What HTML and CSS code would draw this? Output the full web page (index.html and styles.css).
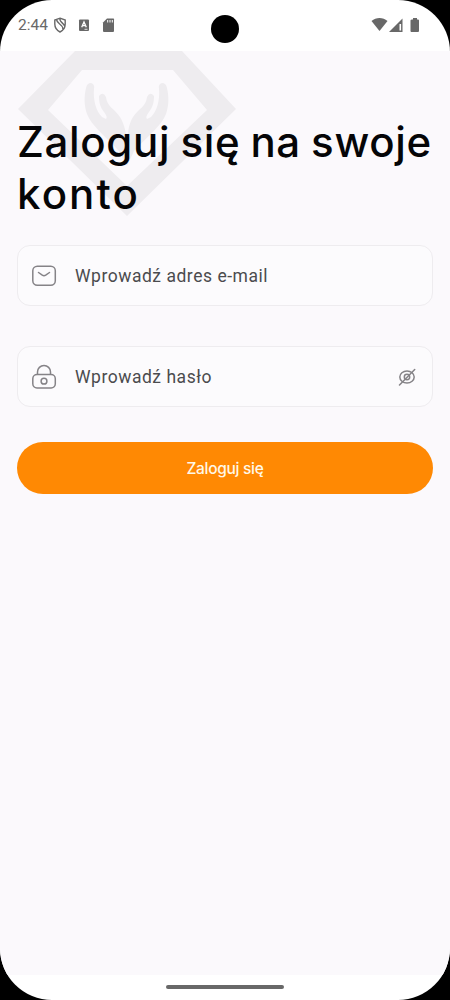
FILE: index.html
```html
<!DOCTYPE html>
<html lang="pl">
<head>
<meta charset="utf-8">
<title>Zaloguj się</title>
<link rel="stylesheet" href="styles.css">
</head>
<body>
<div class="screen">
  <header class="status">
    <span class="clock">2:44</span>
    <svg class="status-left" width="64" height="18" viewBox="0 0 64 18">
      <path d="M7 2.200 12.200 4V8C12.200 12 10 14.500 7 16C4 14.500 1.800 12 1.800 8V4ZM3.500 3.500C4.500 9 9 7 10 13M7 2.500C6 6 11 7 11.500 10" fill="none" stroke="#686868" stroke-width="1.400"/>
      <rect x="26" y="3.500" width="10" height="11.500" rx="1" fill="#686868"/>
      <path d="M28.700 11.300 31 6 33.300 11.300M29.700 9.700H32.300" fill="none" stroke="#fff" stroke-width="1.300"/>
      <path d="M31.500 13.300H34.500" stroke="#fff" stroke-width=".8"/>
      <path d="M54 2.500H60.500Q61 2.500 61 3.200V15Q61 16 60 16H51Q50 16 50 15V6.500Z" fill="#686868"/>
      <path d="M54.700 4V6.500M57 4V6.500M59.300 4V6.500" stroke="#fff" stroke-width="1"/>
    </svg>
    <svg class="status-right" width="50" height="18" viewBox="0 0 50 18">
      <path d="M.5 5C5 1 12 1 16.500 5L8.500 15Z" fill="#686868"/>
      <path d="M31.500 2.500V16H18Z" fill="#686868"/>
      <path d="M29.300 8V14.500" stroke="#fff" stroke-width="1.600"/>
      <path d="M41 3.500H42V2H46V3.500H47Q48 3.500 48 4.500V15Q48 16 47 16H40.500Q39.500 16 39.500 15V4.500Q39.500 3.500 41 3.500Z" fill="#686868"/>
    </svg>
    <span class="camera"></span>
  </header>
  <main class="content">
    <svg class="emblem" width="220" height="166" viewBox="18 51 220 166">
      <path fill="#eeecef" fill-rule="evenodd" d="M75 51H182L236 109 127 216 18 109ZM82 70 48 110 127 186 207 110 173 70Z"/>
      <g fill="#eeecef">
        <path d="M86 88Q87 83 91 83Q95 84 94 89C93 100 96 111 102 117L106 119Q108 117 104 112C100 107 99 102 99 96Q103 91 106 97C107 107 114 108 120 117C125 125 126 134 127 142L127 166L119 151C104 135 91 125 87 114C84 105 84 97 86 88Z"/>
        <path d="M167 88Q166 83 162 83Q158 84 159 89C160 100 157 111 151 117L147 119Q145 117 149 112C153 107 154 102 154 96Q150 91 147 97C146 107 139 108 133 117C128 125 128 134 127 142L127 166L134 151C149 135 162 125 166 114C169 105 169 97 167 88Z"/>
      </g>
    </svg>
    <h1 class="title">Zaloguj się na swoje <span class="wide">konto</span></h1>
    <form class="form">
      <label class="field">
        <svg width="26" height="26" viewBox="0 0 26 26" fill="none" stroke="#858387" stroke-width="1.500" stroke-linecap="round" stroke-linejoin="round"><rect x="1.800" y="3.300" width="22.500" height="19" rx="4.500"/><path d="m7.500 9.500 3.800 2.700q1.700 1.100 3.400 0l3.800-2.700"/></svg>
        <span class="hint">Wprowadź adres e-mail</span>
      </label>
      <label class="field">
        <svg width="26" height="26" viewBox="0 0 26 26" fill="none" stroke="#858387" stroke-width="1.500" stroke-linecap="round"><rect x="1.800" y="10.500" width="22.500" height="13.500" rx="4.200"/><path d="M6.500 10V8a6.500 6.500 0 0 1 13 0v2"/><circle cx="13" cy="17.200" r="2.900"/></svg>
        <span class="hint">Wprowadź hasło</span>
        <svg class="eye" width="18" height="18" viewBox="0 0 18 18" fill="none" stroke="#858387" stroke-width="1.500" stroke-linecap="round"><ellipse cx="9" cy="9" rx="7.200" ry="6"/><circle cx="9" cy="9" r="2.700"/><path d="M1.500 17 16.700 1.500"/></svg>
      </label>
      <button class="submit" type="button">Zaloguj się</button>
    </form>
  </main>
  <footer class="navigation"><span class="handle"></span></footer>
</div>
</body>
</html>
```
FILE: styles.css
```css
* { box-sizing: border-box; }
body { margin: 0; background: #000; }
.screen {
  width: 450px; height: 1000px; overflow: hidden;
  display: flex; flex-direction: column;
  background: #fff; border-radius: 52px;
}
.status {
  position: relative; height: 51px; flex: none;
  display: flex; align-items: flex-start; padding: 16px 29px 0 18px;
}
.clock { font: 400 15.500px/19px Roboto, sans-serif; color: #686868; letter-spacing: 0; width: 35px; }
.status-right { margin-left: auto; }
.camera {
  position: absolute; left: 211px; top: 15px;
  width: 28px; height: 28px; border-radius: 50%; background: #000;
}
.content { position: relative; flex: 1; padding: 65px 17px 0; background: #fbf9fc; }
.emblem { position: absolute; left: 18px; top: 0; }
.title {
  position: relative; margin: 0; width: 420px;
  font: 500 42px/52px Inter, sans-serif; letter-spacing: .65px; word-spacing: -1.600px; color: #050507;
}
.wide { letter-spacing: 2.100px; }
.form { display: flex; flex-direction: column; margin-top: 25px; }
.field {
  height: 61px; margin-bottom: 40px; padding: 0 16px 0 13px;
  display: flex; align-items: center;
  border: 1px solid #eeecef; border-radius: 13px; background: #fcfbfd;
}
.field + .field { margin-bottom: 35px; }
.hint { margin-left: 18px; font: 400 17.500px/24px Roboto, sans-serif; letter-spacing: .53px; color: #4b4b4e; }
.eye { margin-left: auto; }
.submit {
  height: 52px; border: 0; border-radius: 26px; background: #ff8903; color: #fff8e8;
  font: 500 15.500px/20px Inter, sans-serif; letter-spacing: -.3px; padding: 2px 0 0;
}
.navigation {
  height: 25px; flex: none; display: flex; justify-content: center; padding-top: 10px;
}
.handle { width: 118px; height: 4px; border-radius: 2px; background: #686868; }
```
